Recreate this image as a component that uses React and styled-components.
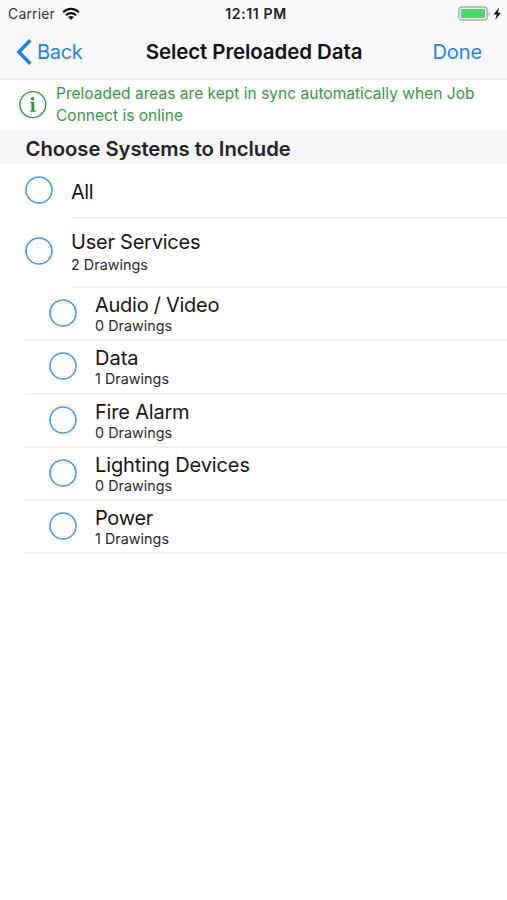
import React, { useState } from 'react';
import styled, { createGlobalStyle } from 'styled-components';

const GlobalStyle = createGlobalStyle`
  * {
    box-sizing: border-box;
  }

  body {
    margin: 0;
    background: #ffffff;
    color: #151515;
    font-family: 'Inter', 'Liberation Sans', sans-serif;
  }
`;

const Screen = styled.div`
  width: 100%;
  min-height: 900px;
  background: #ffffff;
`;

const Header = styled.header`
  height: 80px;
  background: #f9f9f9;
  border-bottom: 2px solid #ebebec;
`;

const StatusBar = styled.div`
  display: grid;
  grid-template-columns: 1fr auto 1fr;
  align-items: center;
  height: 27px;
  padding: 0 5px 0 8px;
  font-size: 14px;
  line-height: 27px;
`;

const Carrier = styled.div`
  display: flex;
  align-items: center;
  gap: 7px;
  color: #333333;
  letter-spacing: 0.15px;
`;

const Clock = styled.div`
  padding-left: 2px;
  color: #222222;
  font-weight: 600;
  letter-spacing: 0.65px;
`;

const Battery = styled.div`
  display: flex;
  justify-content: flex-end;
`;

const NavBar = styled.nav`
  display: grid;
  grid-template-columns: 1fr auto 1fr;
  align-items: center;
  height: 50px;
  padding: 0 25px 0 26px;
`;

const NavButton = styled.button`
  display: flex;
  align-items: center;
  justify-self: ${(props) => props.$side};
  gap: 5px;
  margin-left: ${(props) => (props.$side === 'start' ? '-10px' : 0)};
  padding: 0;
  border: none;
  background: transparent;
  color: #1782fb;
  font-family: inherit;
  font-size: 20px;
  line-height: 26px;
  letter-spacing: ${(props) => props.$spacing};
`;

const Title = styled.h1`
  margin: 0;
  color: #111111;
  font-size: 20.5px;
  font-weight: 600;
  line-height: 26px;
  letter-spacing: -0.1px;
`;

const Notice = styled.div`
  display: flex;
  align-items: center;
  gap: 9px;
  height: 50px;
  padding: 0 20px 0 19px;
  color: #309a37;
  font-size: 15.5px;
  line-height: 22px;
`;

const NoticeText = styled.p`
  margin: 0;
  letter-spacing: 0.02px;
`;

const SectionTitle = styled.h2`
  height: 34px;
  margin: 0;
  padding-left: 25.5px;
  background: #f6f6f7;
  color: #242426;
  font-size: 20.3px;
  font-weight: 600;
  line-height: 37px;
  letter-spacing: -0.06px;
`;

const List = styled.ul`
  margin: 0;
  padding: 0;
  list-style: none;
`;

const Row = styled.li`
  display: flex;
  height: ${(props) => props.$height}px;
  padding-left: ${(props) => (props.$child ? 49 : 25)}px;
  cursor: pointer;
  ${(props) =>
    props.$child &&
    `
    background: linear-gradient(#f1f1f2, #f1f1f2) 25px 100% / 100% 2px no-repeat;
  `}
`;

const Radio = styled.svg`
  flex: none;
  width: 28px;
  height: 28px;
  margin-top: ${(props) => props.$top}px;
  margin-right: 18px;
  stroke: #3f97f8;
  stroke-width: 1.6px;
  fill: ${(props) => (props.$checked ? '#3f97f8' : 'none')};
`;

const RowText = styled.div`
  flex: 1;
  padding-top: ${(props) => props.$top}px;
  ${(props) => props.$line && 'border-bottom: 2px solid #f1f1f2;'}
`;

const Name = styled.div`
  font-size: 20px;
  line-height: 24px;
  letter-spacing: ${(props) => props.$spacing || 0}px;
`;

const Count = styled.div`
  margin-top: ${(props) => props.$gap}px;
  color: #262626;
  font-size: 14.3px;
  line-height: 18px;
  letter-spacing: 0.05px;
`;

const WifiIcon = () => (
  <svg width="18" height="14" viewBox="0 0 18 14" fill="none" stroke="#111" strokeWidth="2.2">
    <path d="M1.2 5.2C5.6 0.8 12.4 0.8 16.8 5.2" />
    <path d="M4 8.2C6.9 5.4 11.1 5.4 14 8.2" />
    <path d="M9 13L6.2 10.1C7.8 8.7 10.2 8.7 11.8 10.1Z" fill="#111" stroke="none" />
  </svg>
);

const BatteryIcon = () => (
  <svg width="44" height="16" viewBox="0 0 44 16">
    <rect x="0.8" y="1" width="28.4" height="13" rx="3.2" fill="#f9f9f9" stroke="#adadad" strokeWidth="1.4" />
    <rect x="2.7" y="2.9" width="24.4" height="9.2" rx="1" fill="#4cd964" />
    <path d="M30.6 5.2C32.4 6 32.4 9.2 30.6 10Z" fill="#adadad" />
    <path d="M41.2 1.2L35.6 8.4H38.8L37.2 13.8L43 6.8H39.8Z" fill="#111" />
  </svg>
);

const BackIcon = () => (
  <svg width="16" height="26" viewBox="0 0 16 26" fill="none" stroke="#1782fb" strokeWidth="3.4">
    <path d="M14.3 1.2L2.8 13L14.3 24.8" />
  </svg>
);

const InfoIcon = () => (
  <svg width="28" height="28" viewBox="0 0 28 28" fill="#309a37">
    <circle cx="13.8" cy="13.6" r="13" fill="none" stroke="#309a37" strokeWidth="1.4" />
    <circle cx="13.6" cy="7.8" r="1.8" />
    <path d="M11 11H15.3V19.4H16.8V20.7H11V19.4H12.4V12.3H11Z" />
  </svg>
);

const systems = [
  { name: 'All', height: 55, radioTop: 12, textTop: 16, spacing: -0.5 },
  { name: 'User Services', count: 2, height: 69, radioTop: 18, textTop: 11, spacing: -0.24 },
  { name: 'Audio / Video', count: 0, child: true, spacing: -0.27 },
  { name: 'Data', count: 1, child: true },
  { name: 'Fire Alarm', count: 0, child: true, spacing: -0.2 },
  { name: 'Lighting Devices', count: 0, child: true, spacing: -0.12 },
  { name: 'Power', count: 1, child: true, spacing: -0.3 },
];

const App = () => {
  const [selected, setSelected] = useState({});

  const toggle = (name) => {
    setSelected({ ...selected, [name]: !selected[name] });
  };

  return (
    <Screen>
      <GlobalStyle />
      <Header>
        <StatusBar>
          <Carrier>
            Carrier
            <WifiIcon />
          </Carrier>
          <Clock>12:11 PM</Clock>
          <Battery>
            <BatteryIcon />
          </Battery>
        </StatusBar>
        <NavBar>
          <NavButton $side="start" $spacing="-0.3px">
            <BackIcon />
            Back
          </NavButton>
          <Title>Select Preloaded Data</Title>
          <NavButton $side="end" $spacing="-0.1px">
            Done
          </NavButton>
        </NavBar>
      </Header>
      <Notice>
        <InfoIcon />
        <NoticeText>
          Preloaded areas are kept in sync automatically when Job
          <br />
          Connect is online
        </NoticeText>
      </Notice>
      <SectionTitle>Choose Systems to Include</SectionTitle>
      <List>
        {systems.map((item) => (
          <Row
            key={item.name}
            $child={item.child}
            $height={item.height || 53.3}
            onClick={() => toggle(item.name)}
          >
            <Radio viewBox="0 0 28 28" $top={item.radioTop || 11} $checked={selected[item.name]}>
              <circle cx="14" cy="14" r="13" />
            </Radio>
            <RowText $line={!item.child} $top={item.textTop || 5}>
              <Name $spacing={item.spacing}>{item.name}</Name>
              {item.count !== undefined && (
                <Count $gap={item.child ? 0 : 2}>{item.count} Drawings</Count>
              )}
            </RowText>
          </Row>
        ))}
      </List>
    </Screen>
  );
};

export default App;
